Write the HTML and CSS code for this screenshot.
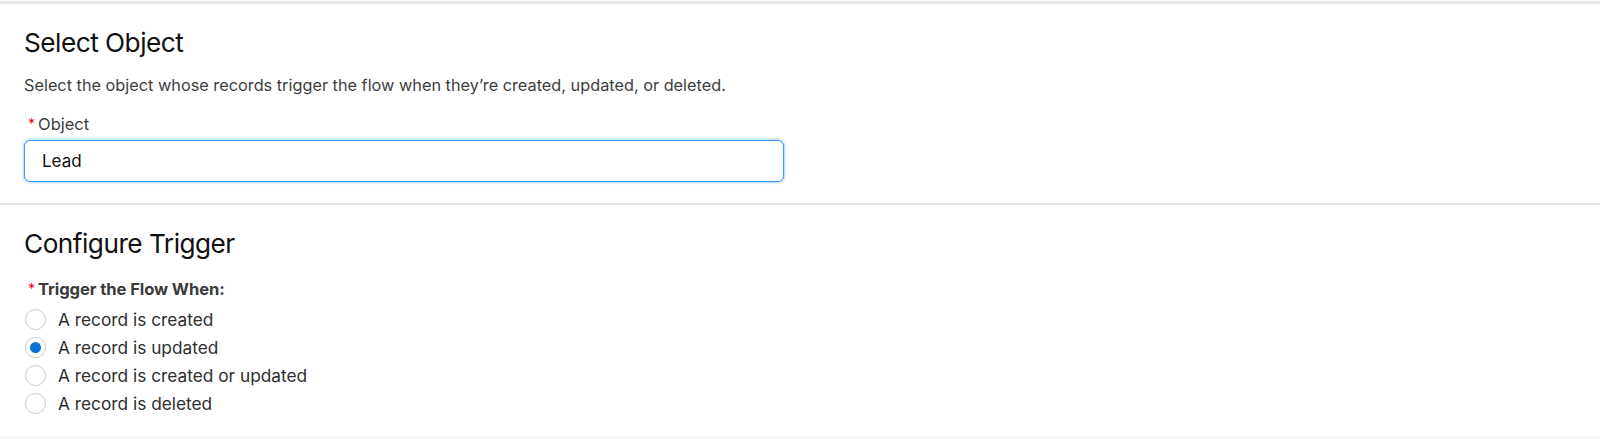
FILE: index.html
```html
<!DOCTYPE html>
<html lang="en">
<head>
<meta charset="utf-8">
<title>Start Element</title>
<link rel="stylesheet" href="styles.css">
</head>
<body>
<div class="panel">
  <section class="section section-object">
    <h2 class="section-title">Select Object</h2>
    <p class="section-desc">Select the object whose records trigger the flow when they’re created, updated, or deleted.</p>
    <div class="field">
      <label class="field-label" for="obj"><abbr class="required" title="required">*</abbr>Object</label>
      <input id="obj" class="input" type="text" value="Lead">
    </div>
  </section>
  <section class="section section-trigger">
    <h2 class="section-title">Configure Trigger</h2>
    <fieldset class="radio-group">
      <legend class="group-label"><abbr class="required" title="required">*</abbr>Trigger the Flow When:</legend>
      <label class="radio"><span class="radio-faux"></span><span class="radio-text">A record is created</span></label>
      <label class="radio checked"><span class="radio-faux"></span><span class="radio-text">A record is updated</span></label>
      <label class="radio"><span class="radio-faux"></span><span class="radio-text">A record is created or updated</span></label>
      <label class="radio"><span class="radio-faux"></span><span class="radio-text">A record is deleted</span></label>
    </fieldset>
  </section>
</div>
</body>
</html>
```
FILE: styles.css
```css
html, body {
  margin: 0;
  padding: 0;
  background: #ffffff;
}
body {
  padding-top: 1px;
  font-family: Inter, "Liberation Sans", Arial, sans-serif;
  color: #181818;
}
.panel {
  border-top: 3px solid #e6e6e6;
  border-bottom: 1px solid #eeeeee;
}
.section {
  padding: 0 24px;
}
.section-object {
  height: 201px;
  box-sizing: border-box;
  padding-top: 23px;
  border-bottom: 2px solid #e5e5e5;
}
.section-trigger {
  height: 232px;
  box-sizing: border-box;
  padding-top: 23px;
}
.section-title {
  margin: 0;
  font-size: 26.2px;
  line-height: 32px;
  font-weight: 400;
  color: #111111;
  letter-spacing: -0.5px;
}
.section-desc {
  margin: 13.5px 0 0;
  font-size: 16.3px;
  line-height: 24px;
  color: #3e3e3e;
}
.field {
  margin-top: 15px;
}
.field-label {
  display: block;
  font-size: 16.5px;
  line-height: 24px;
  color: #3e3e3e;
}
.required {
  text-decoration: none;
  border: 0;
  color: #ea001e;
  font-size: 14px;
  font-weight: 400;
  letter-spacing: 0;
  margin: 0 3px 0 4px;
  position: relative;
  top: -1px;
}
.input {
  display: block;
  box-sizing: border-box;
  margin-top: 3.5px;
  width: 760px;
  height: 42px;
  padding: 0 16px 0 17px;
  border: 1px solid #3d9cff;
  border-radius: 6px;
  box-shadow: 0 0 3px #5aa9ff;
  outline: none;
  font-family: inherit;
  font-size: 17px;
  color: #111111;
  background: #ffffff;
}
.radio-group {
  margin: 16.5px 0 0;
  padding: 0;
  border: 0;
  min-width: 0;
}
.group-label {
  display: block;
  padding: 0;
  font-size: 16.6px;
  line-height: 24px;
  font-weight: 700;
  letter-spacing: -0.1px;
  color: #3a3a3a;
  margin-bottom: 4px;
}
.radio {
  display: flex;
  align-items: center;
  height: 28.1px;
}
.radio-faux {
  box-sizing: border-box;
  width: 21px;
  height: 21px;
  margin-left: 1px;
  border: 1px solid #c9c9c9;
  border-radius: 50%;
  background: #ffffff;
  display: flex;
  align-items: center;
  justify-content: center;
  flex: none;
}
.radio.checked .radio-faux::after {
  content: "";
  width: 11px;
  height: 11px;
  border-radius: 50%;
  background: #0b72d8;
}
.radio-text {
  margin-left: 12px;
  font-size: 17.3px;
  line-height: 24px;
  color: #2e2e2e;
}
```
